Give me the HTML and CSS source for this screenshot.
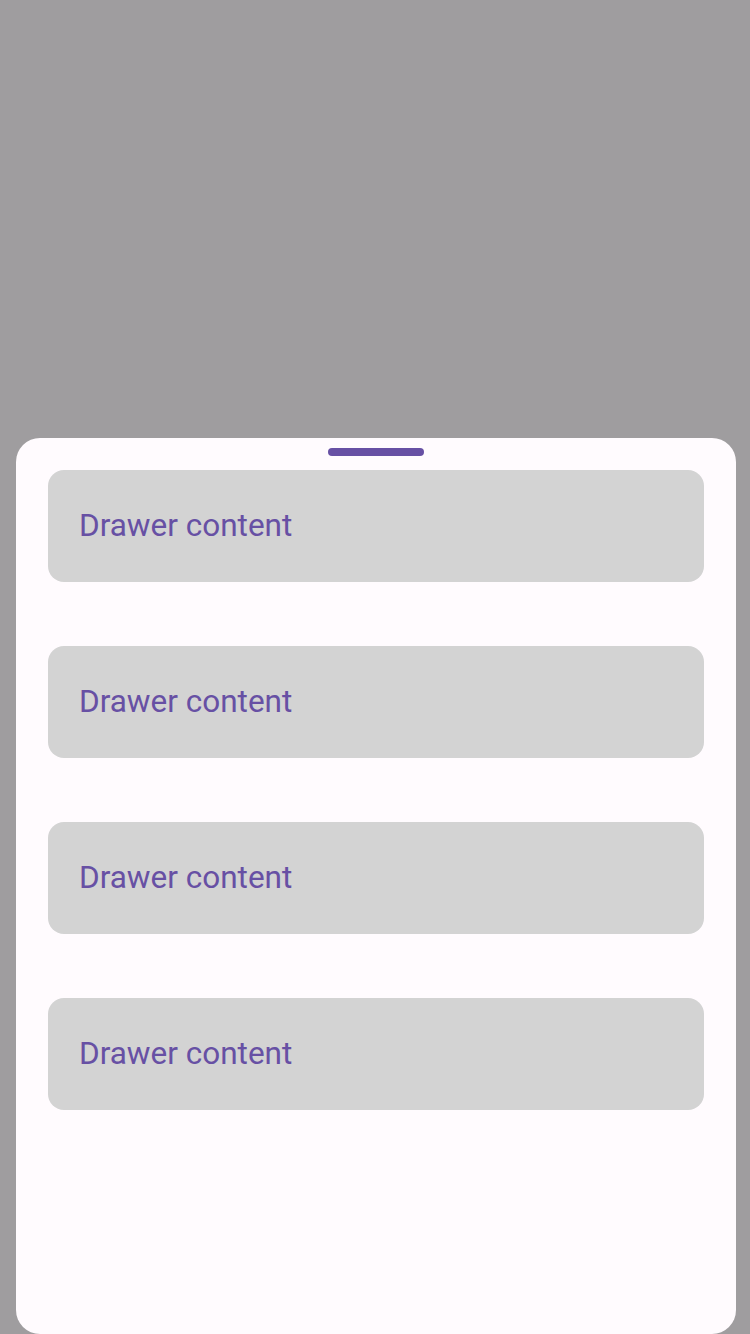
FILE: index.html
```html
<!DOCTYPE html>
<html>
<head>
<meta charset="utf-8">
<link rel="stylesheet" href="styles.css">
</head>
<body>
<div class="screen">
  <div class="scrim"></div>
  <div class="sheet">
    <div class="handle"></div>
    <div class="list">
      <div class="item">Drawer content</div>
      <div class="item">Drawer content</div>
      <div class="item">Drawer content</div>
      <div class="item">Drawer content</div>
    </div>
  </div>
</div>
</body>
</html>
```
FILE: styles.css
```css
html, body {
  margin: 0;
  padding: 0;
}
body {
  width: 750px;
  height: 1334px;
  overflow: hidden;
  background: #9f9d9f;
  font-family: Roboto, "Noto Sans", sans-serif;
}
.screen {
  display: flex;
  flex-direction: column;
  height: 1334px;
}
.scrim {
  height: 438px;
  flex: none;
}
.sheet {
  margin: 0 14px 0 16px;
  height: 896px;
  background: #fffbfe;
  border-radius: 24px;
  display: flex;
  flex-direction: column;
  align-items: center;
}
.handle {
  width: 96px;
  height: 8px;
  border-radius: 4px;
  background: #6750a4;
  margin-top: 10px;
}
.list {
  align-self: stretch;
  padding: 14px 32px 0 32px;
  display: flex;
  flex-direction: column;
  gap: 64px;
}
.item {
  height: 112px;
  box-sizing: border-box;
  padding: 0 0 2px 31px;
  background: #d3d3d3;
  border-radius: 16px;
  display: flex;
  align-items: center;
  font-size: 31.5px;
  color: #6750a4;
}
```
